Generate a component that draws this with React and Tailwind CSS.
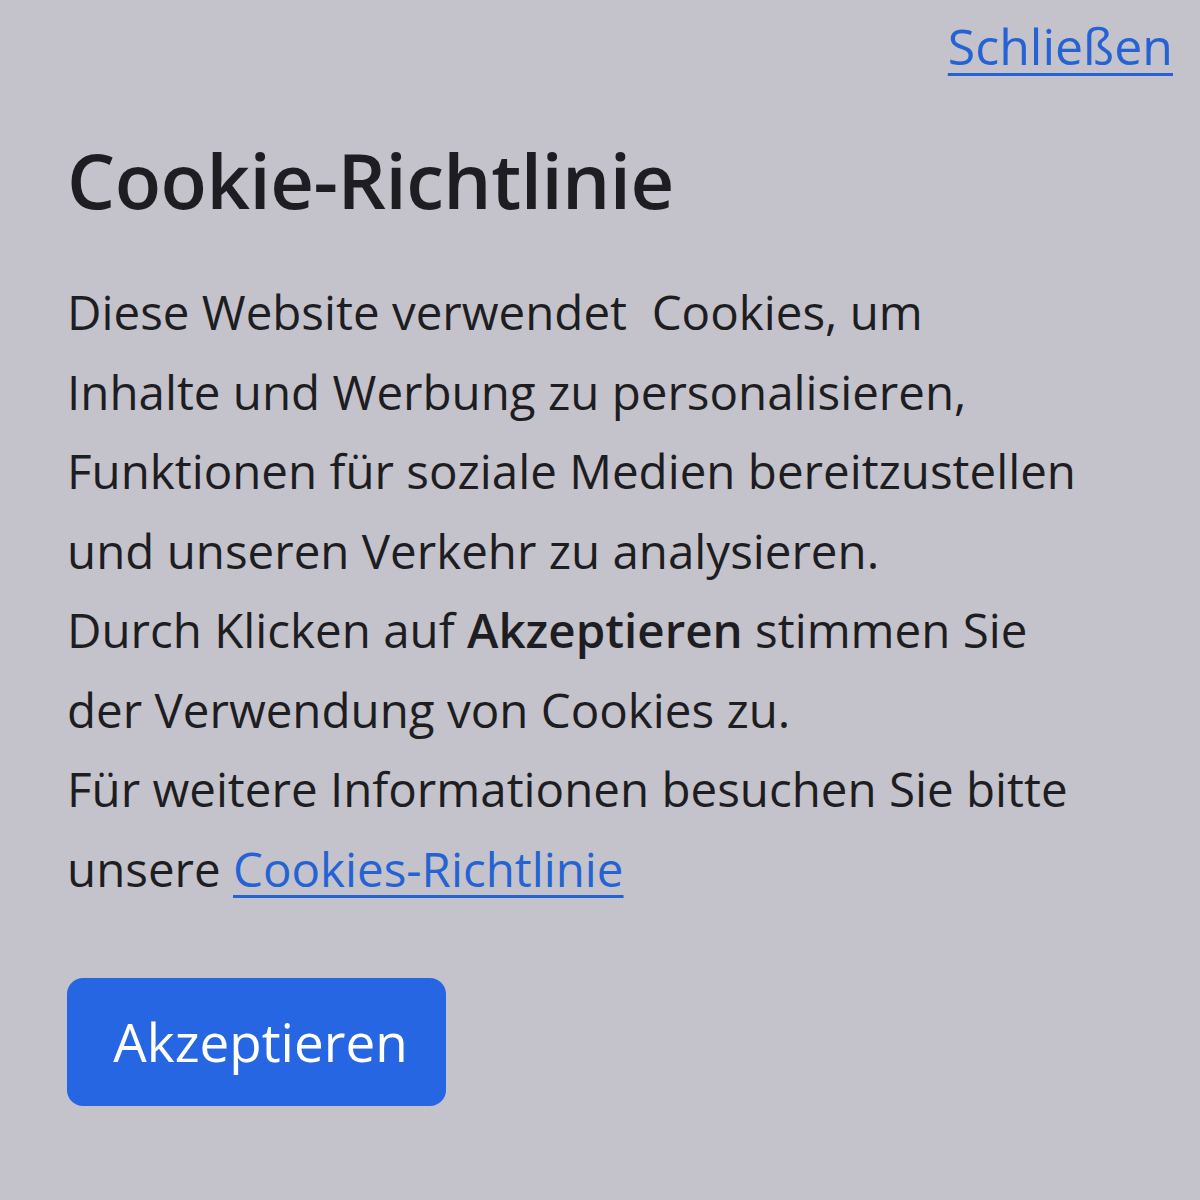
export default function App() {
  return (
    <div className="min-h-[1200px] w-[1200px] bg-[#c4c3cb] font-['Open_Sans',sans-serif] text-[#1e1e22]">
      <div className="flex justify-end pt-[14px] pr-[27px]">
        <a href="#" className="text-[50px] leading-[64px] text-[#2563d4] underline decoration-[3px] underline-offset-[8px]">
          Schließen
        </a>
      </div>

      <div className="pl-[67px] pt-[57px]">
        <h1 className="text-[76px] font-semibold leading-[90px] tracking-[-0.5px]">Cookie-Richtlinie</h1>

        <p className="mt-[47px] text-[47.5px] leading-[79.5px]">
          Diese Website verwendet&nbsp; Cookies, um
          <br />
          Inhalte und Werbung zu personalisieren,
          <br />
          Funktionen für soziale Medien bereitzustellen
          <br />
          und unseren Verkehr zu analysieren.
          <br />
          Durch Klicken auf <span className="font-semibold">Akzeptieren</span> stimmen Sie
          <br />
          der Verwendung von Cookies zu.
          <br />
          Für weitere Informationen besuchen Sie bitte
          <br />
          unsere{" "}
          <a href="#" className="text-[#2563d4] underline decoration-[3px] underline-offset-[8px]">
            Cookies-Richtlinie
          </a>
        </p>

        <button className="mt-[70px] flex h-[128px] w-[379px] items-center justify-center rounded-[16px] bg-[#2766e2] pl-[8px] text-[53px] text-white">
          Akzeptieren
        </button>
      </div>
    </div>
  );
}
